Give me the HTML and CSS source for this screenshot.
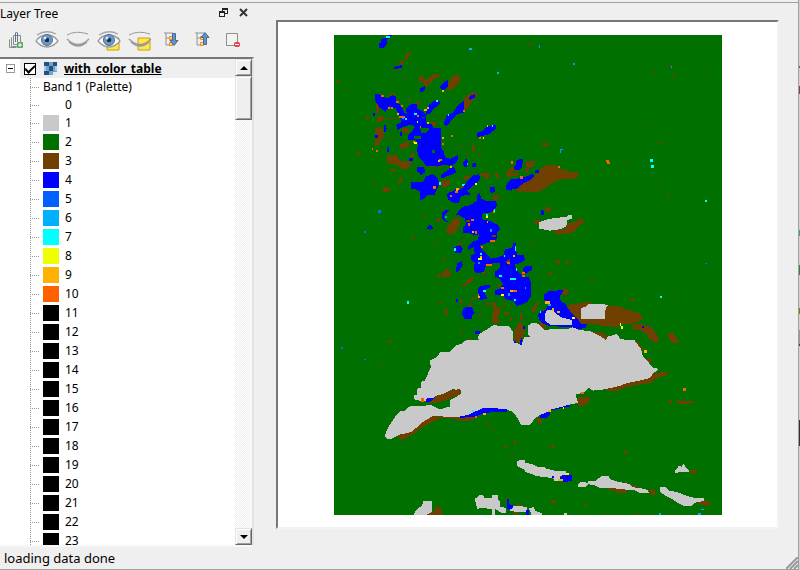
FILE: index.html
```html
<!DOCTYPE html>
<html lang="en">
<head>
<meta charset="utf-8">
<title>Layer Tree</title>
<link rel="stylesheet" href="styles.css">
</head>
<body>
<svg class="defs" aria-hidden="true">
  <defs>
    <g id="eye">
      <path d="M1 11Q5 5 12 5Q19 5 23 11Q18 17 12 17Q6 17 1 11z" fill="#fafafa" stroke="#999b99" stroke-width="1.3"/>
      <path d="M2 5Q11-1 21 4" fill="none" stroke="#a5a7a5" stroke-width="1.3"/>
      <circle cx="12" cy="10" r="5.5" fill="#7198c5" stroke="#4e719f"/>
      <circle cx="12" cy="10" r="2.3" fill="#123052"/>
      <circle cx="10" cy="8" r="1.5" fill="#d7e7f7"/>
    </g>
    <g id="closed-eye" fill="none" stroke="#999b99">
      <path d="M1 5Q10 0 22 4" stroke-width="1"/>
      <path d="M1 9Q12 20 23 9M3 12Q12 20 21 12" stroke-width="1.4"/>
    </g>
    <path id="note" d="M9 8h12v12H9z" fill="#ffe64a" stroke="#c9a208"/>
    <g id="branches">
      <path d="M1 2h9M3 2v12h4M3 7h4" fill="none" stroke="#929292"/>
      <path d="M6.500 5.500h3v3h-3zM6.500 11.500h3v3h-3z" fill="#ffd28c" stroke="#f28a1c"/>
    </g>
  </defs>
</svg>
<div class="desktop">
<main class="window">
  <div class="content">
    <section class="dock">
      <header class="dock-title">
        <h1>Layer Tree</h1>
        <button type="button" aria-label="Float"><svg width="9" height="9" viewBox="0 0 9 9"><path d="M3 0h6v6H6V5h2V2H4v1H3zM0 3h6v6H0zM1 5v3h4V5z" fill="#222" fill-rule="evenodd"/></svg></button>
        <button type="button" aria-label="Close"><svg width="9" height="9" viewBox="0 0 9 9"><path d="M1 1l7 7M8 1L1 8" stroke="#333" stroke-width="2"/></svg></button>
      </header>
      <div class="toolbar">
        <button type="button" aria-label="Add group"><svg width="16" height="18" viewBox="0 0 16 18"><g fill="none" stroke="#8b8d8b"><path d="M5.500 4.500h7v9h-7zM3.500 6.500v9h7M1.500 8.500v8h7"/><path d="M7.500 11V2q1-2 2 0v9" stroke="#5b7695"/></g><rect x="9" y="11" width="6" height="6" rx="1" fill="#5fa56b"/><path d="M12 12v4M10 14h4" stroke="#fff"/></svg></button>
        <button type="button" aria-label="Show layers"><svg width="24" height="20" viewBox="0 0 24 20"><use href="#eye"/></svg></button>
        <button type="button" aria-label="Hide layers"><svg width="24" height="20" viewBox="0 0 24 20"><use href="#closed-eye"/></svg></button>
        <button type="button" aria-label="Show selected"><svg width="24" height="22" viewBox="0 -1 24 22"><use href="#note" x="1"/><use href="#eye"/></svg></button>
        <button type="button" aria-label="Hide selected"><svg width="24" height="22" viewBox="0 -1 24 22"><use href="#note" x="1"/><use href="#closed-eye"/></svg></button>
        <button type="button" aria-label="Expand all"><svg width="16" height="18" viewBox="0 0 16 18"><use href="#branches"/><path d="M9.500 2.500h3v7h2.500l-4 5-4-5h2.500z" fill="#6593c6" stroke="#426b9b"/></svg></button>
        <button type="button" aria-label="Collapse all"><svg width="16" height="18" viewBox="0 0 16 18"><use href="#branches"/><path d="M9.500 13.500h3v-7h2.500l-4-5-4 5h2.500z" fill="#6593c6" stroke="#426b9b"/></svg></button>
        <button type="button" aria-label="Remove layer"><svg width="16" height="18" viewBox="0 0 16 18"><path d="M1.500 2.500h11v12h-11z" fill="#f3f3f3" stroke="#8b8d8b"/><rect x="9" y="11" width="6" height="5" rx="2" fill="#e63e49"/><path d="M10 13.500h4" stroke="#fff"/></svg></button>
      </div>
      <div class="tree-frame">
        <div class="tree">
          <div class="layer">
            <button type="button" class="fold" aria-label="Collapse"></button>
            <label><input type="checkbox" checked>
              <svg width="13" height="13" viewBox="0 0 13 13" shape-rendering="crispEdges"><path d="M0 0h13v13H0z" fill="#72a0cf"/><path d="M0 0h5v4H0zM9 0h4v4H9zM5 4h4v5H5zM0 9h5v4H0z" fill="#24527f"/><path d="M0 4h2v5H0zM11 4h2v5h-2z" fill="#a9c9e8"/><path d="M9 10h4v3H9z" fill="#e4edf7"/></svg>
              <span>with_color_table</span></label>
          </div>
          <ul>
            <li class="plain">Band 1 (Palette)</li>
            <li class="plain value">0</li>
            <li><i class="swatch c1"></i>1</li>
            <li><i class="swatch c2"></i>2</li>
            <li><i class="swatch c3"></i>3</li>
            <li><i class="swatch c4"></i>4</li>
            <li><i class="swatch c5"></i>5</li>
            <li><i class="swatch c6"></i>6</li>
            <li><i class="swatch c7"></i>7</li>
            <li><i class="swatch c8"></i>8</li>
            <li><i class="swatch c9"></i>9</li>
            <li><i class="swatch c10"></i>10</li>
            <li><i class="swatch"></i>11</li>
            <li><i class="swatch"></i>12</li>
            <li><i class="swatch"></i>13</li>
            <li><i class="swatch"></i>14</li>
            <li><i class="swatch"></i>15</li>
            <li><i class="swatch"></i>16</li>
            <li><i class="swatch"></i>17</li>
            <li><i class="swatch"></i>18</li>
            <li><i class="swatch"></i>19</li>
            <li><i class="swatch"></i>20</li>
            <li><i class="swatch"></i>21</li>
            <li><i class="swatch"></i>22</li>
            <li><i class="swatch"></i>23</li>
          </ul>
        </div>
        <div class="scrollbar">
          <button type="button" aria-label="Scroll up"><svg width="8" height="4" viewBox="0 0 8 4"><path d="M4 0l4 4H0z"/></svg></button>
          <div class="thumb"></div>
          <div class="track"></div>
          <button type="button" aria-label="Scroll down"><svg width="8" height="4" viewBox="0 0 8 4"><path d="M0 0h8L4 4z"/></svg></button>
        </div>
      </div>
    </section>
    <section class="canvas">
      <svg viewBox="0 0 1164 1440" role="img" aria-label="Classified raster" shape-rendering="crispEdges">
        <path d="M0 0h1164v1440H0z" fill="#007000"/>
        <!-- north-west -->
        <g>
          <path fill="#704000" d="M218 53h14v10h-8v12h-10v-14h4zM198 82l12-6v12l-14 4zM180 99h9v9h-9zM6 138l14-3v4l-10 5zM208 126h8v3h-8zM258 124l10-5v14h12l8-8 16-8h16v7l-12 4-14 14-12 10-8 5-5-15h-12zM340 156l10-22 12-14h18v18l-14 16-16 12-8-2zM390 190l14-10 14-8h13v10l-20 24-6 14-14 4zM172 173h13v8h-8v8h-10v-10h5zM98 243h8v8h-8zM132 243h18v8l-10 12-12-4zM126 205h9v30h-9zM125 278l20-2 8 26-14 20-4 10h-12zM205 280h20v12l-18 3zM195 330l30-12v18l-20 8zM160 362l30-4 8 18 20 6 16-6-2 14-20 14-24-14-28-6zM70 351h8v8h-8zM170 404l14-3v9l-12 4zM196 432l12-6-2 14-12 8zM150 456l25 3-12 12-14 2zM416 324l7 8v18l-8-4zM450 421l20-3v8l-16 6zM480 415h14v6h-14zM436 354h6v8h-6zM586 22h6v6h-6zM524 400l30-8v14l-28 6zM576 378h24v16l-20 6zM556 448l22-12 22-10v42l-44 2-14-8zM282 392h42v5h-36zM328 440l20-6v16l-20 10zM244 206l10-10 4 12-12 6zM288 262h20v12h-14zM388 428l20-9v6l-12 12zM376 456l30-8-10 12zM284 316l16 4-8 16zM228 363l14-12v8l-9 12zM150 249h38v3h-38zM224 190h6v8h-6zM162 312h12v4h-12zM374 330h6v5h-6zM396 354h8v6h-8zM346 394h8v6h-8zM414 404h9v5h-9zM400 462h10v4h-10zM122 441h9v3h-9z"/>
          <path fill="#00f" d="M135 25h8V12l14-4h5l2-8h14l-9 10-8 2v14l-10 12h-14zM180 96l24-6v9l-23 3zM258 160l16-6v10l-10 8-6-2zM318 158l14-18 10-4v20l-12 10zM330 268l10-28 18-6 12-20 20-16 4 34-24 6-18 20-12 14zM404 192l8-10 12-4v10l-14 6zM430 306v-12l18-6 14-14 24-4v12l-20 16-24 6zM118 235h6v8h-6zM150 270h6l4 10-4 12h-6zM162 338l4-8v22h-6zM198 292h8v10h-8zM124 300h10v8h-8zM225 370h13v8h-13zM250 396l20 2 4 14-10 6-12-8zM388 386l8-14 8 4-4 20h-8zM416 388h12v8h-12zM468 464l14-10 4 14-12 6zM520 462l12-18 20-12 20-6 28-6v10l-24 12-26 20-30 1zM540 402l12-22 14-7v16l-12 18z"/>
          <path fill="#00f" d="M123 178L133 176L150 186L165 190L176 180L186 184L188 200L200 210L212 232L222 238L216 222L232 208L250 208L252 222L266 228L278 240L276 262L294 268L300 278L322 278L324 340L332 352L334 366L350 372L374 360L374 374L362 388L344 392L324 386L312 388L300 394L286 390L270 382L256 366L250 344L254 328L246 316L224 314L222 302L236 290L244 276L236 268L210 276L192 284L188 270L204 262L196 238L186 220L168 214L156 230L138 218L130 204L123 196z"/>
          <path fill="#00f" d="M276 240L280 222L288 208L304 196L320 200L318 208L300 222L290 236zM272 436L284 424L300 424L314 432L316 446L304 462L304 480H258L276 464L286 452L272 446zM232 442H264L270 460L256 468L234 456zM322 420L344 404L362 398L368 410L344 420L322 430zM340 480L350 470L374 468L392 456L400 440L420 420H436L438 434L424 448L412 458L398 470L412 480z"/>
          <path fill="#007000" d="M242 304h20v8h-20zM296 346h8v8h-8zM260 278h26v6l-10 10h-14zM266 246h8v4h-8z"/>
          <g fill="none" stroke-width="6">
            <path stroke="#ff6000" d="M141 183h9M163 219h6M171 219h6M187 200h8M197 246h16M203 213h6M115 342h3M126 348h6M250 243h6M258 276h3M238 322h6M315 375h9M324 327h6M351 304h6M387 229h6M301 453h6M559 426h9M531 382h6M436 308h6"/>
            <path stroke="#ffb000" d="M324 168h6M189 236h6M271 226h8M280 219h6M280 264h6M324 310h6M350 397h6M367 463h8M459 273h3"/>
            <path stroke="#0ff" d="M158 6h10M240 237h9M306 197h6M342 241h5M316 445h5M214 251h6M384 451h9M474 272h4"/>
            <path stroke="#ff0" d="M249 261h3M240 323h9M424 447h5M447 310h4"/>
            <path stroke="#00b0ff" d="M405 41h9M491 114h5M397 386h5M205 250h5"/>
          </g>
        </g>
        <!-- north-east -->
        <g transform="translate(498 -15)">
          <path fill="#704000" d="M90 36h4v5h5v4h-9zM117 69h3v6h-3zM461 125h6v6h-6zM521 132h4v10h-4zM612 117h3v7h-3zM508 105h8v3h-8zM453 282h6v3h-6zM471 336h9v9h-3v-6h-6zM489 336h6v4h-6zM125 339h22v8h-16l-6-3zM57 330h3v6h-3zM378 396h3v6h-3zM477 450h3v6h-3zM503 495h4v6h-4zM93 396l14-2v8h-13zM22 424l14 6 20-3v9l-32 6zM75 414h14v14l-10 2zM57 470l16-10 18-6 12-12 16-22 18-14h28l2 10h32v10h34l3 6-5 11h-34l-18 8-18 4-18 15-20 12-16 4h-34z"/>
          <path fill="#00f" d="M48 395l12-8h10l-2 22-12 12-14-8 6-8zM22 460l14-12h30l14-8 18-8v10l-18 12-30 10-14 18-18-4zM108 420h9l3 9h-12z"/>
          <path fill="none" stroke-width="6" stroke="#ff6000" d="M33 397h6M60 442h9M318 394h9M323 399h9M174 412h6"/>
          <path fill="none" stroke-width="9" stroke="#0ff" d="M450 391h9M453 409h9"/>
          <path fill="#009cff" d="M117 45h3v9h-3zM219 99h6v6h-6zM180 357h9v3h-6v9h-3zM513 108h3v6h-3z"/>
        </g>
        <!-- centre -->
        <g transform="translate(198 375)">
          <path fill="#704000" d="M0 12l20-10 14 10-10 16-24-4zM120 70l14-14 14 8-6 16-14 2zM358 90l14-20 24-12 18-18 20-12 16-13h22v10l28 4 4 8h30l3 10-10 9h-34l-22 8-18 6-20 18-24 10zM434 150l12-9h8v10l-10 8zM402 180h18v12h-12zM140 206l16-22 14-12 14 4-6 24-14 22h-20zM180 376l16-4 8-12 20-10v8l-14 12-16 10zM124 340l20-14 14 18-14 8-16-2zM112 342h8v12h-8zM466 300h15v8h-15zM444 336h9v9h-9zM574 361h7v7h-7zM278 104h20v12l-12 6-6-8zM280 430l10-4v14h14l-4 24h-20zM278 466l12 4 14 18h-26zM356 488l14-2v14l8 10-10 16h-20v-16zM410 426h8l-6 20h-10zM396 440h10v16h-8zM420 490l16-2 4 16-16 8zM486 392l12-8 10 12-6 10h-14zM508 432l24 2 40-10 6 10-34 12-6 26h-20l-14-20zM98 52h12v10h-12zM70 164l12 8-8 4zM36 228h6v8h-6zM108 246h8v5h-8zM130 294h8v6h-8zM112 174h8v12h-8zM240 40h30v8h-26zM288 44h10v10h-10zM208 430h8v10h-8zM238 462h6v10h-6zM334 466l6 14-8 4zM180 514h8v8h-8zM136 452h8v14h-8zM352 20l10-8 4 14-12 6zM320 34l14 4v8l-14 4zM172 248h16v8h-16zM190 236h6v8h-6zM246 334h12v8h-12zM292 374h10v8h-10zM180 418h6v16h-6zM216 412h16v4h-16zM256 430h20v5h-20zM310 428h8v8h-8zM390 246h6v5h-6zM500 304h7v8h-7zM330 440h8v4h-8zM118 374h6v4h-6z"/>
          <path fill="#704000" d="M456 214L498 206L500 192L518 188L540 178H554L550 190L534 204L524 216L502 222L476 224z"/>
          <path fill="#00f" d="M70 4h70v8l-26 8-14-4-20 2zM58 24l14-4 6 14-14 14zM190 12l6-10 10 2-4 10zM220 10h10v10h-10zM344 22l14-14 10-8v22l-10 10zM320 86l10-24 20-6 20-2 14-6 16-6v6l-20 14-22 12-16 12zM406 30h10v8h-10zM270 82h16v12l-14 2zM126 160l14-12 8 4-14 16 2 12 12 4-8 2-12-10zM80 204l10-10 12 10-8 6zM160 262l20-6 12 10-8 14-16-2zM168 330l6-20 12-6 4 10-10 16-8 8zM234 388l10-10 26-4v10l-18 8 12 24-20 4-8-8zM190 448l10-8 18 2 6 16-14 20h-14l-8-14zM168 418h8v8h-8zM226 514h14v8h-14zM424 150l8 2 2 12h-8zM368 498h6v10h-6zM286 390l16-4 8 20h-22zM370 328l8-10h18v12l-18 12z"/>
          <path fill="#00f" d="M34 68L70 66L78 50L100 42L116 54L118 76L108 96L84 104L70 118L62 120V90L48 88H36zM124 50L150 34L148 24L162 22L170 38L150 46L124 56zM142 104L168 88L200 90L212 100L184 110L178 128L164 130L146 118zM194 76L222 50L238 42L242 54L224 72L210 86z"/>
          <path fill="#00f" d="M168 166L178 152L190 140L212 136L232 122V108L240 100L246 116L258 122L290 124L292 136L284 152L266 160L250 158L246 178L258 180L276 184L296 196L302 208L292 218L294 236L280 244L262 250L240 256L246 268L262 284L274 296L296 292L312 286L316 268L336 264L342 250H348L352 284L374 286L376 300L362 310L346 314L352 332L370 348L388 352L394 364V408L384 426L366 434L350 438L344 424L320 418L308 404L300 390L310 372L300 356L286 350V336L300 324L302 310H280L256 322L254 336L232 340L222 330L226 308L214 300L216 286L226 280L222 262L206 270V258L218 246L234 240L240 222L226 226L206 218L190 220V204L200 194L196 176L180 166z"/>
          <path fill="#00f" d="M432 406L446 394L490 390L488 402L480 408L484 424L496 430L506 446L518 462L530 474L544 484L562 486L560 504L530 508L518 502L450 498L430 490L418 478L416 462L426 454L438 450L446 436L434 418z"/>
          <path fill="#704000" d="M198 180h14v6h-14zM320 302l10-4v16l-10-4zM276 226h12v6h-12z"/>
          <path fill="#c9c9c9" d="M417 188l20-8 26-6 40-3 2-5h13v10l-14 4-4 20-20 8-28 4-34-6zM543 458l8-16 16-2 4-6h54v45h-64l-18-10z"/>
          <path fill="#c9c9c9" d="M436 462L442 450H460L470 462L486 472L518 480V494L456 496L438 484z"/>
          <g fill="none" stroke-width="7">
            <path stroke="#ff6000" d="M101 82h7M213 179h11M225 217h6M270 242h15M243 261h8M260 315h18M321 308h9M366 338h9M366 347h9M339 393h12M304 384h9M204 193h8M360 52h9M165 96h10M333 8h6M234 405h5M151 108h6M281 154h5"/>
            <path stroke="#ffb000" d="M114 3h7M168 89h8M216 216h7M240 291h8M340 288h7M437 427h13M456 448h6M471 455h9M234 410h6M330 393h9M261 185h5"/>
            <path stroke="#0ff" d="M118 70h5M242 281h5M297 348h9M330 357h18M342 420h6M250 393h8M420 456h5M163 268h5M23 427h4M258 164h6M282 151h5M312 287h4"/>
            <path stroke="#ff0" d="M226 72h5M234 296h14M304 404h9M518 474h9M537 483h6M260 171h6"/>
            <path stroke="#00a0ff" d="M136 170h6M324 403h6M375 384h4M446 434h7M270 211h8M234 308h6"/>
          </g>
          <path fill="none" stroke="#0ff" stroke-width="3" d="M349 258v14M350 324v8"/>
        </g>
        <!-- large island -->
        <g transform="translate(138 765)">
          <path fill="#704000" d="M562 50l34-10 38-3 2 30h40l6-18h40l14 8 40 10 16 18-14 10-20 6-32 2-14 8-48-4-18-6-40 2-14-18zM758 106l20-6 22 6 18 8 14 20 8 20-16 4-14-10-10-18-22-10-20-4zM862 136l6-6h14l8 12 10 16-22 2zM750 28l12-4 6 8-16 2zM404 156v-34l10-14h20v28l-10 22zM470 98l26 6-6 20zM634 124l28 2 20 8 2 18-18-2-12-14zM766 152l12 6 14 24-8 6zM802 202l12 4v12h-10zM590 340l8-18h34v10l-16 14-14 4zM468 380l18 8v14h-6zM868 330h10v8h-10zM892 333l24-2 4 4 24-2v7l-48 2zM320 396h6v9h-6zM338 413h6v6h-6zM402 449h8v9l-8 6zM372 467h8v6h-8zM514 465h7v8h-7zM24 150h9v8h-9zM0 222h3v9h-3zM192 54l8 4v12h-8zM178 36h8v6h-8zM240 124h8v8h-8zM881 10h3v4h-3zM768 321h5v3h-5zM420 70l8-2 2 18-8 6zM336 84l8-34h18l-4 30-8 18h-14zM374 66h14v8h-14zM268 144h8v4h-8zM52 428L76 430L96 412L120 394L150 376H230L262 380L284 376L288 386L262 394L220 386L180 384L158 398L128 412L100 434L68 450L58 444zM676 290L716 284L760 274L800 266L818 252L862 244V256L832 264L816 278L780 284L740 292L712 304H680z"/>
          <path fill="#00f" d="M240 376L266 374L272 364L310 350H340L382 356V366L340 366L310 372L284 380L242 384zM506 350L570 342V350L530 358L508 362zM480 372l12-6h20v8l-12 10h-20z"/>
          <path fill="#c9c9c9" d="M104 328V316H112V296L124 294V276L136 272L150 240L156 226L150 222L152 212L168 204L184 186H210L230 166L248 160L260 150H300L294 142L302 130L322 118L340 106L388 108L400 124V148L404 156L426 164L434 140L452 142L444 130L446 106L460 98L478 102L496 122L520 116L560 118L580 112L600 120L634 124L664 140L680 150L684 140L712 132L724 148L764 150L784 176L790 200L806 216L818 232L836 236L832 244L820 250L812 264L780 272L740 280L720 288L676 298L640 302L628 294L612 308L588 314L596 338L570 344L540 352L510 360L504 366L480 376L466 386L452 404H424L414 384L400 366L382 358L340 354L310 354L268 374L240 380H200L160 378L130 396L96 426L60 434L36 446H22L16 438L24 416L48 378L64 362H76L92 348L156 346L180 358L210 350V332L244 312L244 300L220 298L190 312L160 328L130 334z"/>
          <path fill="#c9c9c9" d="M603 56l20-8 4-6h50v45h-72z"/>
          <path fill="#704000" d="M132 334L150 332L168 318L190 312L214 300L240 298L246 308L234 316L210 326L184 336L150 340z"/>
          <path fill="#00f" d="M140 326l26-4-12 12-14 2zM248 64l8-10h20l10 14-8 8v10h-16l-12-10zM286 124h12l2 8h-10zM402 154h8v6h-8zM426 144v22l-6-2v-8zM430 107h5v9h-5zM786 108h7v6h-7zM228 27h8v8h-8z"/>
          <path fill="#ff6000" d="M123 325h9v12h-9zM909 295h9v7h-9zM603 306h9v6h-9zM286 377h6v6h-6z"/>
          <path fill="#ffb000" d="M792 180h9v9h-9zM505 360h8v7h-8zM310 370h8v5h-8z"/>
          <path fill="#ff0" d="M720 99h4v9h5v9h-4v-8h-5zM549 350h3v6h-3z"/>
          <path fill="#0ff" d="M84 33h3v9h-3zM840 18h6v6h-6zM276 360h6v5h-6z"/>
        </g>
        <!-- southern islets -->
        <g transform="translate(198 1215)">
          <path fill="#704000" d="M342 2h8v10h-8zM312 18h10v5h-10zM333 45h6v6h-6zM453 16h9v8h-9zM672 34h9v7h-9zM6 0h3v6h-3zM870 90h23v9h-21zM616 143l36 3 12-4 20 8-6 8h-24zM672 126l10-2v8l20 4 14 2v6l-20 4zM742 150l18-2 8 10-4 12zM886 174l28 4 6 6h12v14l-22-4-20-6zM455 180h15v10h-14zM552 192h9v5h-9zM609 215h6v4h-6zM708 220h6v5h-6zM102 216l6-14h16v12h2v11H82v-5zM316 178h8v6h-8zM350 192h10v6h-10zM340 214h14v8h-10z"/>
          <path fill="#c9c9c9" d="M351 65L361 60H377V68L397 72L412 80L432 80L440 86L466 92H498V104L480 110V120L466 124L460 114L440 112L412 108L378 96L374 88L352 78zM534 134L544 126L566 128V124L588 122L606 108H626L634 118L650 124L690 132L700 142L720 144L744 150L748 158L722 160L704 150L668 148L640 144H600L584 136L566 132L558 140H534zM780 142H800L808 152L832 156L862 168L886 174H912L914 182L888 188L876 198H852L836 190L822 180L800 168L782 156zM826 94L838 78L848 80L850 72H854L858 80L868 92V96L826 98z"/>
          <path fill="#c9c9c9" d="M225 178L239 166H251L255 174H278V166H294V178L302 184V200L320 204V218H304L286 206V225H276V208L254 204L234 206zM332 198l50 2v16l-50-2zM388 204l14-2 6 10 18 8v5h-30zM42 225l10-18 14-8 6-16h26v32l-18 10zM492 219h9v6h-9z"/>
          <path fill="#00f" d="M480 112l12-8h26v18l-20 4-18-4zM456 108h8v7h-8zM321 176h8v16l10 4v8l-8 6-8-4zM378 212l10-2v15h-8z"/>
          <path fill="#ff0" d="M500 98h7v6h-7z"/><path fill="#ffb000" d="M475 118h14v6h-14z"/>
          <path fill="#00a8ff" d="M894 219h9v6h-9zM779 220h6v5h-6zM905 207h7v3h-7z"/>
        </g>
        <!-- isolated water pixels -->
        <path fill="#0070ff" d="M132 525h9v9h-9zM90 588h6v6h-6zM1113 684h6v4h-6zM21 936h6v6h-6zM90 972h6v3h-6z"/>
        <path fill="#0ff" d="M1113 495h6v5h-6z"/>
      </svg>
    </section>
  </div>
  <footer class="status"><output>loading data done</output>
    <svg width="12" height="12" viewBox="0 0 12 12"><path d="M0 12L12 0M4 12l8-8M8 12l4-4" stroke="#999" stroke-width="2"/></svg>
  </footer>
</main>
<div class="behind"></div>
</div>
</body>
</html>
```
FILE: styles.css
```css
* { box-sizing: border-box; }
body {
  margin: 0;
  background: #efefef;
  color: #000;
  font: 12px/18px "Noto Sans", "Open Sans", sans-serif;
}
button { padding: 0; border: 0; background: none; display: grid; place-items: center; }
svg { display: block; flex: none; }
.defs { display: none; }
.desktop { display: flex; height: 100vh; }
.window {
  flex: 1;
  min-width: 0;
  display: flex;
  flex-direction: column;
  padding-top: 2px;
  border-right: 1px solid #a0a0a0;
  border-bottom: 1px solid #a0a0a0;
}
.behind {
  width: 1px;
  background: linear-gradient(#d0d0d0 0 66px, #3d7f3d 66px 68px, #d0d0d0 68px 86px, #7c4a4a 86px 94px, #d0d0d0 94px 230px, #4ba06a 230px 236px, #d0d0d0 236px 265px, #3d7f3d 265px 275px, #d0d0d0 275px 308px, #808000 308px 314px, #d0d0d0 314px 330px, #999 330px 344px, #444 344px 346px, #d0d0d0 346px 420px, #333 420px 446px, #d0d0d0 446px);
}
.content { flex: 1; min-height: 0; display: flex; border-top: 1px solid #a0a0a0; }

.dock { width: 254px; flex: none; display: flex; flex-direction: column; }
.dock-title { display: flex; align-items: flex-start; gap: 11px; height: 22px; padding: 2px 6px 0 0; }
.dock-title h1 { flex: 1; margin: 0; font-size: 12px; font-weight: 400; line-height: 18px; }
.dock-title button { width: 9px; height: 15px; }
.toolbar { display: flex; height: 32px; }
.toolbar button { width: 31px; height: 30px; }

.tree-frame {
  flex: 1;
  min-height: 0;
  display: flex;
  background: #fff;
  border-top: 2px solid #777;
  border-right: 2px solid #e3e3e3;
  border-bottom: 2px solid #f7f7f7;
}
.tree { flex: 1; min-width: 0; overflow: hidden; }
.layer {
  display: flex;
  align-items: center;
  height: 19px;
  padding-left: 6px;
  font-weight: 700;
  text-decoration: underline;
  background: linear-gradient(90deg, #fff 20px, #efefef 20px);
}
.fold {
  width: 9px;
  height: 9px;
  margin-right: 9px;
  border: 1px solid #999;
  background: linear-gradient(#000, #000) center / 5px 1px no-repeat #fff;
}
.layer label { display: flex; align-items: center; }
.layer input {
  appearance: none;
  width: 12px;
  height: 12px;
  margin: 0 8px 0 0;
  border: 1px solid #000;
  background: #fff;
  display: grid;
  place-items: center;
}
.layer input:checked::before {
  content: "";
  width: 8px;
  height: 4px;
  margin-bottom: 2px;
  border: solid #000;
  border-width: 0 0 2px 2px;
  transform: rotate(-45deg);
}
.layer svg { margin-right: 7px; }
.tree ul {
  list-style: none;
  margin: 0 0 0 30px;
  padding: 0;
  background: repeating-linear-gradient(#999 0 1px, transparent 1px 2px) left / 1px 100% no-repeat;
}
.tree li {
  display: flex;
  align-items: center;
  gap: 6px;
  height: 19px;
  padding: 0 0 1px 13px;
  background: repeating-linear-gradient(90deg, #999 0 1px, transparent 1px 2px) left center / 9px 1px no-repeat;
}
.tree li.plain { height: 18px; padding-bottom: 0; }
.tree li.value { padding-left: 35px; }
.swatch { width: 16px; height: 16px; background: #000; }
.c1 { background: #c9c9c9; }
.c2 { background: #007000; }
.c3 { background: #704000; }
.c4 { background: #0000ff; }
.c5 { background: #0060ff; }
.c6 { background: #00b0ff; }
.c7 { background: #00ffff; }
.c8 { background: #f0ff00; }
.c9 { background: #ffb000; }
.c10 { background: #ff6000; }

.scrollbar {
  width: 17px;
  flex: none;
  display: flex;
  flex-direction: column;
  background: repeating-conic-gradient(#efefef 0 25%, #fff 0 50%) 0 0 / 2px 2px;
}
.scrollbar button, .thumb {
  width: 17px;
  height: 17px;
  background: #efefef;
  border: 1px solid;
  border-color: #e3e3e3 #696969 #696969 #e3e3e3;
  box-shadow: inset 1px 1px #fff, inset -1px -1px #a0a0a0;
}
.thumb { height: 44px; }
.track { flex: 1; }

.canvas {
  flex: 1;
  min-width: 0;
  margin: 17px 19px 18px 22px;
  padding: 13px 12px 12px;
  background: #fff;
  border: 2px solid;
  border-color: #777 #f3f3f3 #f3f3f3 #777;
}
.canvas svg { width: 100%; height: 100%; }
.status { display: flex; justify-content: space-between; align-items: flex-end; height: 22px; padding-left: 4px; }
.status output { font-size: 13px; line-height: 22px; }
```
